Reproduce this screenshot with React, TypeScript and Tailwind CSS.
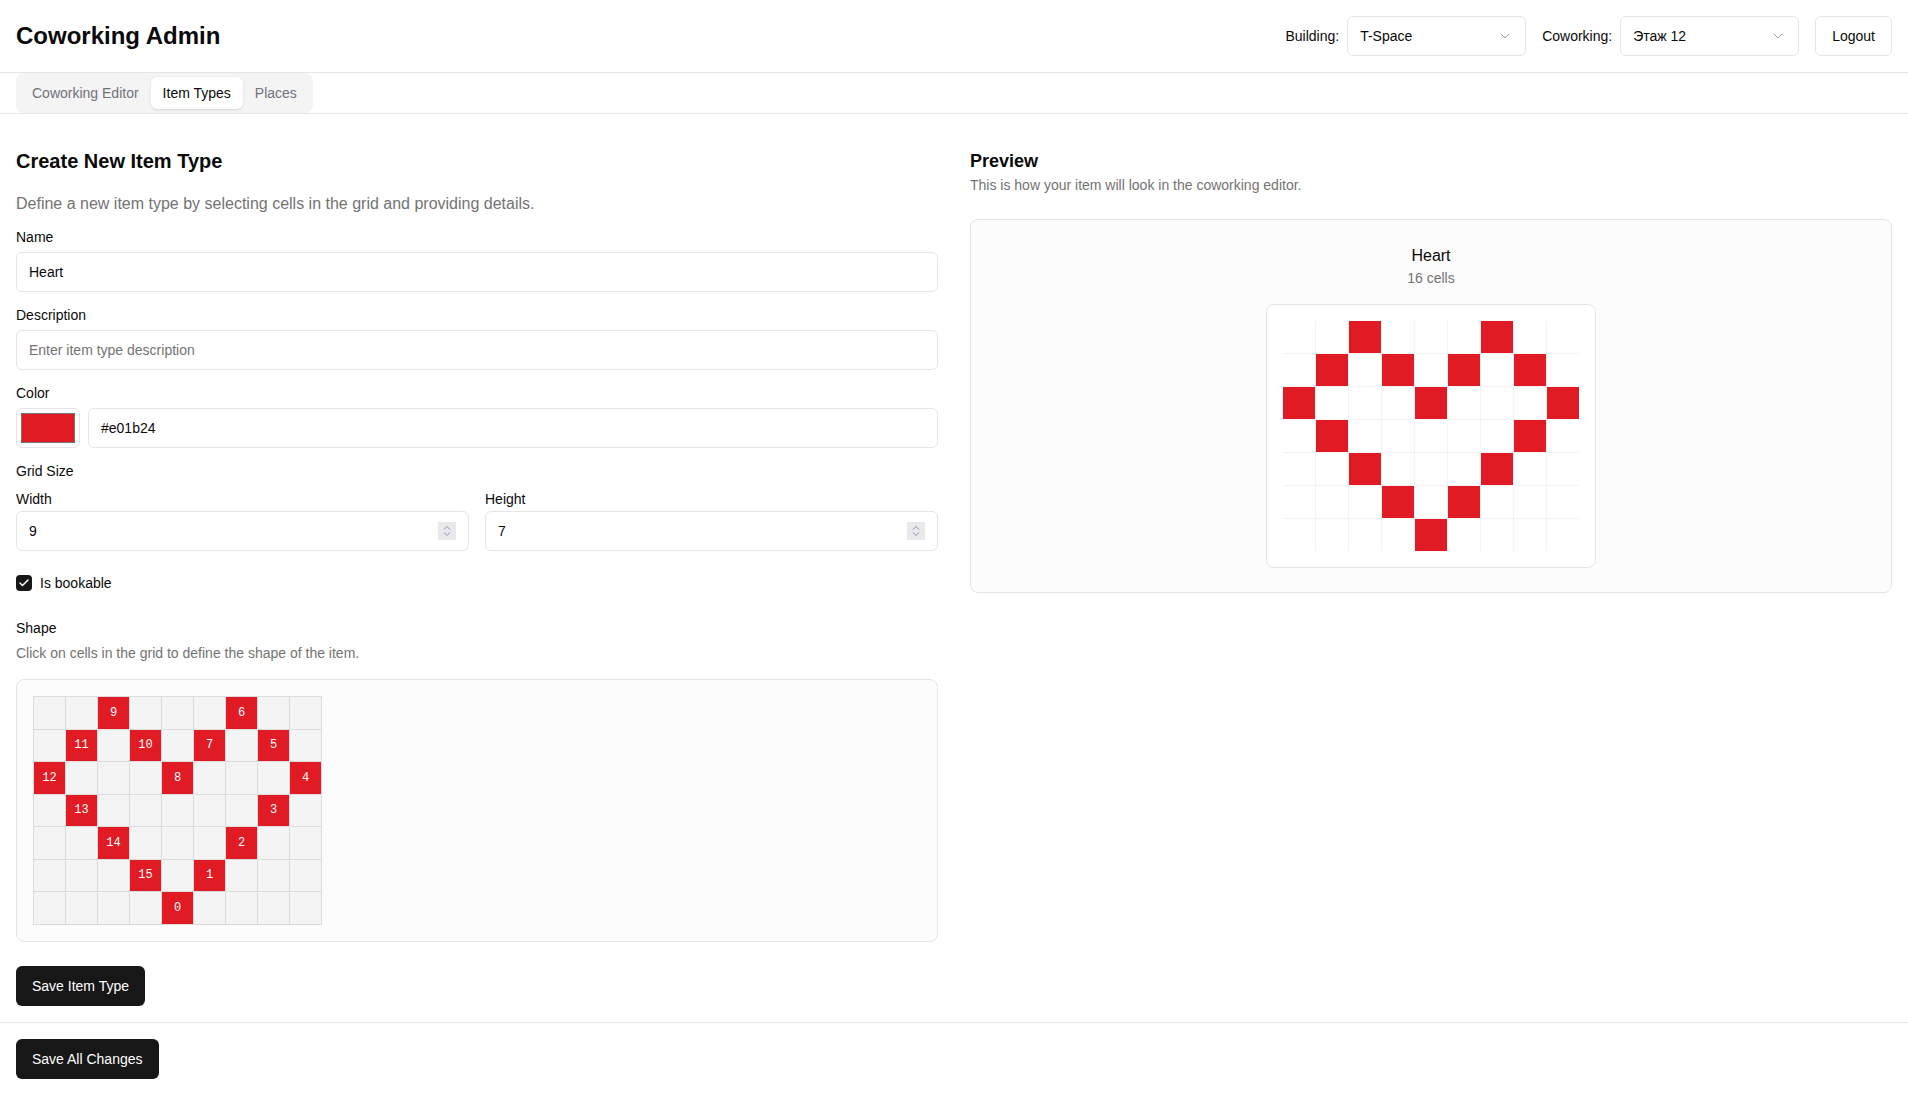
import { Check, ChevronDown } from "lucide-react";

const RED = "#e01b24";

// heart shape: [row, col, order]
const CELLS: [number, number, number][] = [
  [0, 2, 9], [0, 6, 6],
  [1, 1, 11], [1, 3, 10], [1, 5, 7], [1, 7, 5],
  [2, 0, 12], [2, 4, 8], [2, 8, 4],
  [3, 1, 13], [3, 7, 3],
  [4, 2, 14], [4, 6, 2],
  [5, 3, 15], [5, 5, 1],
  [6, 4, 0],
];

const W = 9;
const H = 7;

function cellAt(r: number, c: number) {
  const hit = CELLS.find(([rr, cc]) => rr === r && cc === c);
  return hit ? hit[2] : null;
}

function Select({ value }: { value: string }) {
  return (
    <div className="flex h-10 w-[179px] items-center justify-between rounded-md border border-[#e5e5e5] bg-white px-3 text-sm text-[#0a0a0a]">
      <span>{value}</span>
      <ChevronDown className="h-4 w-4 text-[#0a0a0a] opacity-40" strokeWidth={1.5} />
    </div>
  );
}

function Spinner() {
  return (
    <div className="flex h-[18px] w-[18px] flex-col items-center justify-center bg-[#e9e9ed]">
      <svg width="10" height="14" viewBox="0 0 10 14" fill="none" stroke="#8f8f9d" strokeWidth="1">
        <path d="M2 5.5 L5 2.5 L8 5.5" />
        <path d="M2 8.5 L5 11.5 L8 8.5" />
      </svg>
    </div>
  );
}

function NumberField({ label, value }: { label: string; value: string }) {
  return (
    <div>
      <div className="text-sm font-medium leading-none">{label}</div>
      <div className="mt-[5px] flex h-10 items-center justify-between rounded-md border border-[#e5e5e5] bg-white pl-3 pr-3 text-sm">
        <span>{value}</span>
        <Spinner />
      </div>
    </div>
  );
}

export default function App() {
  return (
    <div className="flex min-h-screen flex-col bg-white font-['Liberation_Sans',Arial,sans-serif] text-[#0a0a0a]">
      {/* header */}
      <header className="flex h-[73px] items-center justify-between border-b border-[#e5e5e5] px-4">
        <h1 className="text-2xl font-bold">Coworking Admin</h1>
        <div className="flex items-center gap-4">
          <div className="flex items-center gap-2">
            <span className="text-sm">Building:</span>
            <Select value="T-Space" />
          </div>
          <div className="flex items-center gap-2">
            <span className="text-sm">Coworking:</span>
            <Select value="Этаж 12" />
          </div>
          <button className="h-10 rounded-md border border-[#e5e5e5] bg-white px-4 text-sm">Logout</button>
        </div>
      </header>

      {/* tabs */}
      <div className="border-b border-[#e5e5e5] px-4">
        <div className="inline-flex h-10 items-center rounded-lg bg-[#f4f4f5] p-1 text-sm text-[#71717a]">
          <div className="px-3 py-1.5">Coworking Editor</div>
          <div className="rounded-md bg-white px-3 py-1.5 text-[#0a0a0a] shadow-sm">Item Types</div>
          <div className="px-3 py-1.5">Places</div>
        </div>
      </div>

      {/* main */}
      <main className="grid flex-1 grid-cols-2 items-start gap-8 px-4 pb-4 pt-[33px]">
        {/* form */}
        <div>
          <h2 className="text-xl font-semibold leading-7">Create New Item Type</h2>
          <p className="mt-[17px] text-base leading-6 text-[#737373]">
            Define a new item type by selecting cells in the grid and providing details.
          </p>

          <div className="mt-[14px]">
            <div className="text-sm font-medium leading-none">Name</div>
            <div className="mt-2 flex h-10 items-center rounded-md border border-[#e5e5e5] px-3 text-sm">Heart</div>
          </div>

          <div className="mt-4">
            <div className="text-sm font-medium leading-none">Description</div>
            <div className="mt-2 flex h-10 items-center rounded-md border border-[#e5e5e5] px-3 text-sm text-[#737373]">
              Enter item type description
            </div>
          </div>

          <div className="mt-4">
            <div className="text-sm font-medium leading-none">Color</div>
            <div className="mt-2 flex gap-2">
              <div className="flex h-10 w-16 items-center justify-center rounded-md border border-[#e5e5e5] bg-white">
                <div className="h-[30px] w-[54px] border border-[#767676] bg-[#e01b24]" />
              </div>
              <div className="flex h-10 flex-1 items-center rounded-md border border-[#e5e5e5] px-3 text-sm">#e01b24</div>
            </div>
          </div>

          <div className="mt-4">
            <div className="text-sm font-medium leading-none">Grid Size</div>
            <div className="mt-[14px] grid grid-cols-2 gap-4">
              <NumberField label="Width" value="9" />
              <NumberField label="Height" value="7" />
            </div>
          </div>

          <div className="mt-6 flex items-center gap-2">
            <div className="flex h-4 w-4 items-center justify-center rounded-[4px] bg-[#171717]">
              <Check className="h-3 w-3 text-white" strokeWidth={3} />
            </div>
            <span className="text-sm leading-none">Is bookable</span>
          </div>

          <div className="mt-[30px] text-sm font-medium leading-none">Shape</div>
          <p className="mt-2 text-sm leading-5 text-[#737373]">Click on cells in the grid to define the shape of the item.</p>

          <div className="mt-4 rounded-lg border border-[#e5e5e5] bg-[#fcfcfc] p-4">
            <div className="inline-grid grid-cols-[repeat(9,31px)] gap-px border border-[#dcdcdc] bg-[#dcdcdc]">
              {Array.from({ length: W * H }).map((_, i) => {
                const r = Math.floor(i / W);
                const c = i % W;
                const n = cellAt(r, c);
                return n === null ? (
                  <div key={i} className="h-[31.5px] bg-[#f4f4f4]" />
                ) : (
                  <div
                    key={i}
                    className="flex h-[31.5px] items-center justify-center bg-[#e01b24] font-['Liberation_Mono',monospace] text-xs text-white"
                  >
                    {n}
                  </div>
                );
              })}
            </div>
          </div>

          <button className="mt-6 h-10 rounded-md bg-[#171717] px-4 text-sm text-white">Save Item Type</button>
        </div>

        {/* preview */}
        <div>
          <h2 className="text-lg font-semibold leading-7">Preview</h2>
          <p className="text-sm leading-5 text-[#737373]">This is how your item will look in the coworking editor.</p>

          <div className="mt-6 flex flex-col items-center rounded-lg border border-[#e5e5e5] bg-[#fcfcfc] p-6">
            <div className="text-base font-medium leading-6">Heart</div>
            <div className="text-sm leading-5 text-[#737373]">16 cells</div>
            <div className="mt-4 rounded-lg border border-[#e5e5e5] bg-white p-4">
              <div className="grid grid-cols-[repeat(9,32px)] gap-px bg-[#f3f3f3]">
                {Array.from({ length: W * H }).map((_, i) => {
                  const n = cellAt(Math.floor(i / W), i % W);
                  return (
                    <div
                      key={i}
                      className={n === null ? "h-8 bg-white" : "h-8 bg-[#e01b24]"}
                      style={n === null ? undefined : { backgroundColor: RED }}
                    />
                  );
                })}
              </div>
            </div>
          </div>
        </div>
      </main>

      {/* footer */}
      <footer className="border-t border-[#e5e5e5] p-4">
        <button className="h-10 rounded-md bg-[#171717] px-4 text-sm text-white">Save All Changes</button>
      </footer>
    </div>
  );
}
